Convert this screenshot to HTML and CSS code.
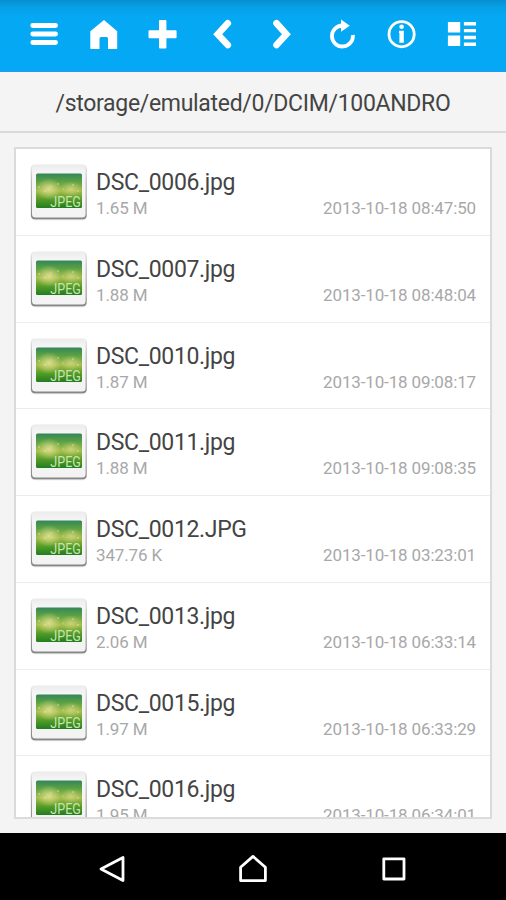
FILE: index.html
```html
<!DOCTYPE html>
<html lang="en">
<head>
<meta charset="utf-8">
<title>File Manager</title>
<link rel="stylesheet" href="styles.css">
</head>
<body>
<svg class="defs" width="0" height="0" aria-hidden="true">
  <defs>
    <linearGradient id="frame" x1="0" y1="0" x2="0" y2="1"><stop offset="0" stop-color="#ececec"/><stop offset=".15" stop-color="#f5f5f5"/><stop offset="1" stop-color="#f3f3f3"/></linearGradient>
    <linearGradient id="edge" x1="0" y1="0" x2="0" y2="1"><stop offset="0" stop-color="#ececec"/><stop offset=".3" stop-color="#bcbcbc"/><stop offset="1" stop-color="#858585"/></linearGradient>
    <linearGradient id="green" x1="0" y1="0" x2="0" y2="1"><stop offset="0" stop-color="#34865a"/><stop offset=".22" stop-color="#58a044"/><stop offset=".5" stop-color="#a5bd4c"/><stop offset=".75" stop-color="#559c28"/><stop offset="1" stop-color="#217d20"/></linearGradient>
    <radialGradient id="glow"><stop offset="0" stop-color="#e9e49a" stop-opacity=".85"/><stop offset="1" stop-color="#d9dc80" stop-opacity="0"/></radialGradient>
    <symbol id="jpeg" viewBox="0 0 60 60">
      <rect x="1.6" y="3" width="56.4" height="55.3" rx="4.5" fill="#000" opacity=".12"/>
      <rect x="2" y="2.6" width="55.6" height="54.6" rx="4" fill="url(#edge)"/>
      <rect x="3" y="2.8" width="53.6" height="52.6" rx="3.5" fill="url(#frame)"/>
      <rect x="7" y="11.5" width="46" height="34.5" rx="1.5" fill="url(#green)"/>
      <ellipse cx="20" cy="27" rx="13" ry="11" fill="url(#glow)"/>
      <ellipse cx="42" cy="27" rx="11" ry="8" fill="url(#glow)" opacity=".7"/>
      <g fill="#fff8c8" opacity=".35"><circle cx="10" cy="25" r="1"/><circle cx="16" cy="29" r="1"/><circle cx="22" cy="24" r=".8"/><circle cx="29" cy="22" r="1"/><circle cx="34" cy="27" r=".8"/><circle cx="44" cy="23" r="1.1"/><circle cx="49" cy="29" r="1"/></g>
      <text class="badge" x="21.3" y="44.6" textLength="30.5" lengthAdjust="spacingAndGlyphs">JPEG</text>
    </symbol>
  </defs>
</svg>
<div class="screen">
  <header class="toolbar">
    <svg class="icon" viewBox="0 0 40 40"><path d="M8.8 11.5h22.7M8.8 20h22.7M8.8 28.5h22.7" fill="none" stroke="#fff" stroke-width="4.9" stroke-linecap="round"/></svg>
    <svg class="icon" viewBox="0 0 40 40"><path d="M20 6 33.2 17.2V34.2Q33.2 35 32.4 35H24V24.5Q24 23 22.5 23H17Q15.5 23 15.5 24.5V35H7.1Q6.3 35 6.3 34.2V17.2Z" fill="#fff"/></svg>
    <svg class="icon" viewBox="0 0 40 40"><path d="M17 6h5.4q1 0 1 1v9.2h9.2q1 0 1 1v6q0 1-1 1h-9.2v9.3q0 1-1 1H17q-1 0-1-1v-9.3H6.5q-1 0-1-1v-6q0-1 1-1H16V7q0-1 1-1Z" fill="#fff"/></svg>
    <svg class="icon" viewBox="0 0 40 40"><path d="M24.8 9.3 14.7 20.2 24.8 31" fill="none" stroke="#fff" stroke-width="6.6" stroke-linecap="round"/></svg>
    <svg class="icon" viewBox="0 0 40 40"><path d="M13.5 9.3 23.4 20.2 13.5 31" fill="none" stroke="#fff" stroke-width="6.6" stroke-linecap="round"/></svg>
    <svg class="icon" viewBox="0 0 40 40"><path d="M19.4 11.5A10.5 10.5 0 1 0 29.9 21" fill="none" stroke="#fff" stroke-width="3.8"/><path d="M18 5.5 26.8 11.7 18 17.8Z" fill="#fff"/></svg>
    <svg class="icon" viewBox="0 0 40 40"><circle cx="19.6" cy="20.2" r="12.6" fill="none" stroke="#fff" stroke-width="2.8"/><circle cx="19.6" cy="12.7" r="2.3" fill="#fff"/><path d="M17 16.8h4.8v12h-4.4V19H17Z" fill="#fff"/></svg>
    <svg class="icon" viewBox="0 0 40 40"><path d="M5.9 8h12.3v10.4H5.9ZM5.9 21.6h12.3V32H5.9ZM21.9 8H34v3.4H21.9ZM21.9 14.9H34v3.4H21.9ZM21.9 21.8H34v3.4H21.9ZM21.9 28.6H34V32H21.9Z" fill="#fff"/></svg>
  </header>
  <div class="path"><span>/storage/emulated/0/DCIM/100ANDRO</span></div>
  <main class="content">
    <ul class="files">
      <li class="file"><svg class="thumb"><use href="#jpeg"/></svg><div class="info"><div class="name">DSC_0006.jpg</div><div class="meta"><span>1.65 M</span><span>2013-10-18 08:47:50</span></div></div></li>
      <li class="file"><svg class="thumb"><use href="#jpeg"/></svg><div class="info"><div class="name">DSC_0007.jpg</div><div class="meta"><span>1.88 M</span><span>2013-10-18 08:48:04</span></div></div></li>
      <li class="file"><svg class="thumb"><use href="#jpeg"/></svg><div class="info"><div class="name">DSC_0010.jpg</div><div class="meta"><span>1.87 M</span><span>2013-10-18 09:08:17</span></div></div></li>
      <li class="file"><svg class="thumb"><use href="#jpeg"/></svg><div class="info"><div class="name">DSC_0011.jpg</div><div class="meta"><span>1.88 M</span><span>2013-10-18 09:08:35</span></div></div></li>
      <li class="file"><svg class="thumb"><use href="#jpeg"/></svg><div class="info"><div class="name">DSC_0012.JPG</div><div class="meta"><span>347.76 K</span><span>2013-10-18 03:23:01</span></div></div></li>
      <li class="file"><svg class="thumb"><use href="#jpeg"/></svg><div class="info"><div class="name">DSC_0013.jpg</div><div class="meta"><span>2.06 M</span><span>2013-10-18 06:33:14</span></div></div></li>
      <li class="file"><svg class="thumb"><use href="#jpeg"/></svg><div class="info"><div class="name">DSC_0015.jpg</div><div class="meta"><span>1.97 M</span><span>2013-10-18 06:33:29</span></div></div></li>
      <li class="file"><svg class="thumb"><use href="#jpeg"/></svg><div class="info"><div class="name">DSC_0016.jpg</div><div class="meta"><span>1.95 M</span><span>2013-10-18 06:34:01</span></div></div></li>
    </ul>
  </main>
  <nav class="navbar">
    <svg class="nav-icon" viewBox="0 0 32 32"><path d="M5 16 27 4.4V27.6Z"/></svg>
    <svg class="nav-icon" viewBox="0 0 32 32"><path d="M3.6 14.2 16 3.4 28.4 14.2V27.6H3.6Z"/></svg>
    <svg class="nav-icon" viewBox="0 0 32 32"><path d="M5.8 5.8H26V26H5.8Z"/></svg>
  </nav>
</div>
</body>
</html>
```

FILE: styles.css
```css
* { box-sizing: border-box; }

body {
  margin: 0;
  font-family: Roboto, "Liberation Sans", sans-serif;
  background: #f4f4f4;
}

.defs { display: block; }

.screen {
  display: flex;
  flex-direction: column;
  width: 506px;
  height: 900px;
  overflow: hidden;
}

.toolbar {
  display: grid;
  grid-template-columns: repeat(8, 1fr);
  justify-items: center;
  align-items: start;
  height: 72px;
  padding: 14px 14px 0;
  background: linear-gradient(#078fcf 0, #06a0e5 7px, #05a8f3 16px, #05a8f4 100%);
  border-bottom: 1px solid #2b96ee;
}

.icon { width: 40px; height: 40px; }

.path {
  display: flex;
  justify-content: center;
  height: 61px;
  padding-top: 18px;
  border-bottom: 2px solid #dadada;
  color: #444;
  font-size: 23px;
  letter-spacing: -0.31px;
  line-height: 28px;
  white-space: nowrap;
}

.content {
  flex: 1;
  min-height: 0;
  padding: 14px 14px 14px;
}

.files {
  height: 672px;
  margin: 0;
  padding: 0;
  overflow: hidden;
  list-style: none;
  background: #fff;
  border: 2px solid #dbdbdb;
}

.file {
  display: flex;
  height: 86.75px;
  padding: 13px 14px 0 13px;
  border-bottom: 1px solid #ececec;
}

.thumb { flex: none; width: 60px; height: 60px; }

.badge {
  font: 400 15px Roboto, sans-serif;
  fill: #c9e4b0;
}

.info { flex: 1; padding-left: 7px; }

.name {
  margin-top: 7px;
  color: #444;
  font-size: 23px;
  letter-spacing: -0.34px;
  line-height: 28px;
}

.meta {
  display: flex;
  justify-content: space-between;
  margin-top: -1px;
  color: #a8a8a8;
  font-size: 17px;
  letter-spacing: -0.14px;
  line-height: 24px;
}

.navbar {
  display: flex;
  flex: none;
  justify-content: center;
  gap: 109px;
  height: 67px;
  padding-top: 20px;
  background: #000;
}

.nav-icon {
  width: 32px;
  height: 32px;
  fill: none;
  stroke: #fff;
  stroke-width: 2.8;
  stroke-linejoin: round;
}
```
